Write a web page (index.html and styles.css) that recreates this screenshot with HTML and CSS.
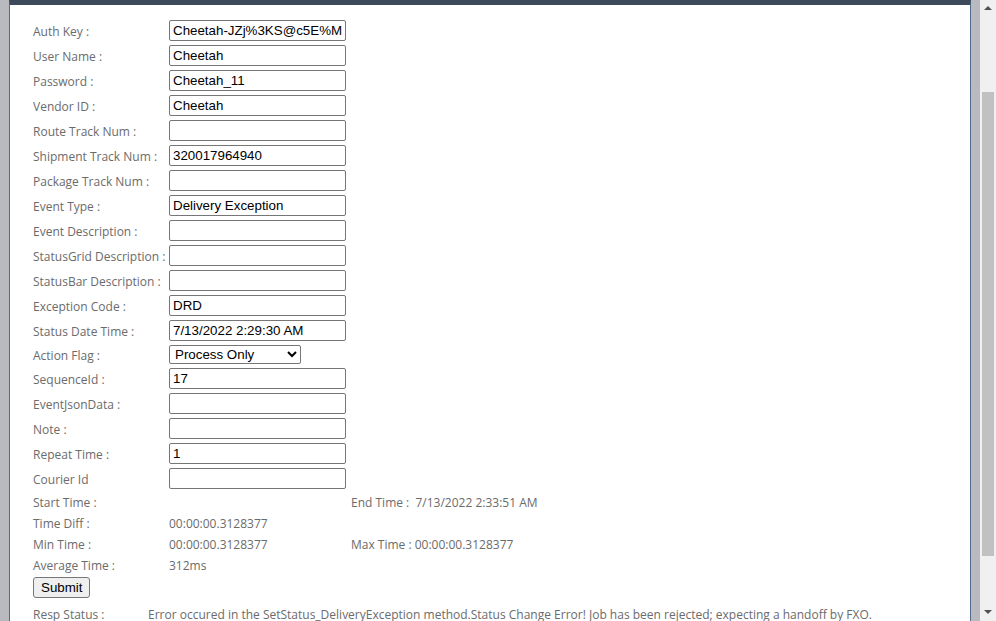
FILE: index.html
```html
<!DOCTYPE html>
<html>
<head>
<meta charset="utf-8">
<title>Set Status</title>
<link rel="stylesheet" href="styles.css">
</head>
<body>
<div class="page">
  <div class="panel">
    <div class="form">
      <label class="lbl">Auth Key :</label><input class="inp" type="text" value="Cheetah-JZj%3KS@c5E%M">
      <label class="lbl">User Name :</label><input class="inp" type="text" value="Cheetah">
      <label class="lbl">Password :</label><input class="inp" type="text" value="Cheetah_11">
      <label class="lbl">Vendor ID :</label><input class="inp" type="text" value="Cheetah">
      <label class="lbl">Route Track Num :</label><input class="inp" type="text" value="">
      <label class="lbl">Shipment Track Num :</label><input class="inp" type="text" value="320017964940">
      <label class="lbl">Package Track Num :</label><input class="inp" type="text" value="">
      <label class="lbl">Event Type :</label><input class="inp" type="text" value="Delivery Exception">
      <label class="lbl">Event Description :</label><input class="inp" type="text" value="">
      <label class="lbl">StatusGrid Description :</label><input class="inp" type="text" value="">
      <label class="lbl">StatusBar Description :</label><input class="inp" type="text" value="">
      <label class="lbl">Exception Code :</label><input class="inp" type="text" value="DRD">
      <label class="lbl">Status Date Time :</label><input class="inp" type="text" value="7/13/2022 2:29:30 AM">
      <label class="lbl">Action Flag :</label>
      <select class="sel"><option>Process Only</option><option>Process and Save</option></select>
      <label class="lbl">SequenceId :</label><input class="inp" type="text" value="17">
      <label class="lbl">EventJsonData :</label><input class="inp" type="text" value="">
      <label class="lbl">Note :</label><input class="inp" type="text" value="">
      <label class="lbl">Repeat Time :</label><input class="inp" type="text" value="1">
      <label class="lbl">Courier Id</label><input class="inp" type="text" value="">
    </div>
    <div class="stats">
      <span class="lbl">Start Time :</span><span class="val"></span><span class="val">End Time :&nbsp; 7/13/2022 2:33:51 AM</span>
      <span class="lbl">Time Diff :</span><span class="val">00:00:00.3128377</span><span class="val"></span>
      <span class="lbl">Min Time :</span><span class="val">00:00:00.3128377</span><span class="val">Max Time : 00:00:00.3128377</span>
      <span class="lbl">Average Time :</span><span class="val">312ms</span><span class="val"></span>
    </div>
    <button class="btn" type="button">Submit</button>
    <div class="resp">
      <span class="lbl">Resp Status :</span>
      <span class="val">Error occured in the SetStatus_DeliveryException method.Status Change Error! Job has been rejected; expecting a handoff by FXO.</span>
    </div>
  </div>
</div>
<div class="scrollbar">
  <div class="arrow up"></div>
  <div class="track"><div class="thumb"></div></div>
  <div class="arrow down"></div>
</div>
</body>
</html>
```

FILE: styles.css
```css
html, body {
  margin: 0;
  padding: 0;
  height: 100%;
  overflow: hidden;
}
body {
  display: flex;
  background: #b9babf;
  font-family: "Open Sans", "Noto Sans", sans-serif;
  font-size: 12px;
  color: #6b6b6b;
}
.page {
  flex: 1;
  padding: 0 9px;
  min-width: 0;
}
.panel {
  background: #fff;
  border-left: 1px solid #4f6c8c;
  border-right: 1px solid #4f6c8c;
  border-top: 5px solid #3c4a5c;
  height: 100%;
  box-sizing: border-box;
  padding: 13px 0 0 23px;
}
.form {
  display: grid;
  grid-template-columns: 136px auto;
  justify-content: start;
  align-items: center;
}
.lbl, .val {
  white-space: nowrap;
  padding-top: 2px;
}
.inp {
  box-sizing: border-box;
  width: 177px;
  height: 21px;
  margin: 2px 0;
  border: 1px solid #767676;
  border-radius: 2px;
  padding: 1px 3px;
  font-family: "Liberation Sans", Arial, sans-serif;
  font-size: 13.333px;
  color: #000;
  background: #fff;
}
.sel {
  box-sizing: border-box;
  width: 132px;
  height: 19px;
  margin: 2px 0;
  font-family: "Liberation Sans", Arial, sans-serif;
  font-size: 13.333px;
  color: #000;
  border: 1px solid #767676;
  border-radius: 2px;
  background: #fff;
  padding: 0 1px;
}
.stats {
  display: grid;
  grid-template-columns: 136px 182px auto;
  grid-auto-rows: 21px;
  justify-content: start;
  align-items: center;
}
.btn {
  box-sizing: border-box;
  height: 21px;
  margin: 2px 0 0 0;
  padding: 1px 7px;
  font-family: "Liberation Sans", Arial, sans-serif;
  font-size: 13.333px;
  color: #000;
  background: #efefef;
  border: 1px solid #767676;
  border-radius: 3px;
}
.resp {
  display: grid;
  grid-template-columns: 115px auto;
  justify-content: start;
  align-items: center;
  height: 30px;
}
.scrollbar {
  width: 16px;
  flex: none;
  background: #f0f0f0;
  display: flex;
  flex-direction: column;
  align-items: center;
}
.arrow {
  width: 0;
  height: 0;
  border-left: 4px solid transparent;
  border-right: 4px solid transparent;
  flex: none;
}
.arrow.up {
  border-bottom: 4px solid #505050;
  margin: 6px 0 6px;
}
.arrow.down {
  border-top: 4px solid #505050;
  margin: 6px 0 7px;
}
.track {
  flex: 1;
  width: 100%;
  box-sizing: border-box;
  padding: 76px 2px 48px;
}
.thumb {
  width: 12px;
  height: 100%;
  background: #c1c1c1;
}
```
